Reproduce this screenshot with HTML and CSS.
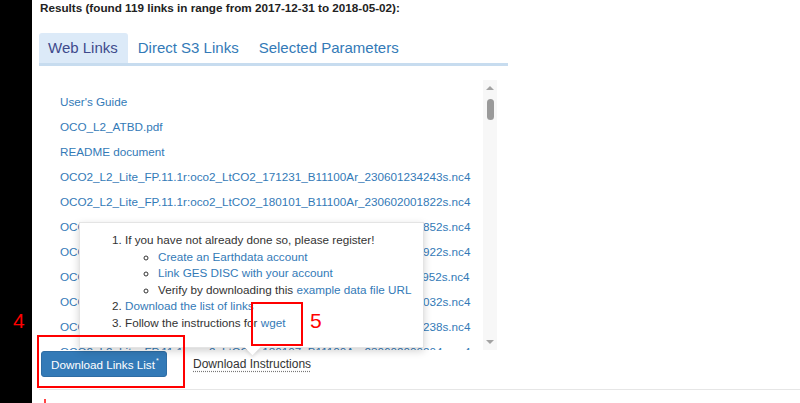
FILE: index.html
```html
<!DOCTYPE html>
<html>
<head>
<meta charset="utf-8">
<link rel="stylesheet" href="styles.css">
</head>
<body>
<div class="page">
  <div class="sidebar"></div>
  <div class="main">
    <div class="title">Results (found 119 links in range from 2017-12-31 to 2018-05-02):</div>
    <div class="tabs">
      <a class="tab active">Web Links</a>
      <a class="tab">Direct S3 Links</a>
      <a class="tab">Selected Parameters</a>
    </div>
    <div class="scrollbox">
      <ul class="links">
        <li><a>User's Guide</a></li>
        <li><a>OCO_L2_ATBD.pdf</a></li>
        <li><a>README document</a></li>
        <li><a>OCO2_L2_Lite_FP.11.1r:oco2_LtCO2_171231_B11100Ar_230601234243s.nc4</a></li>
        <li><a>OCO2_L2_Lite_FP.11.1r:oco2_LtCO2_180101_B11100Ar_230602001822s.nc4</a></li>
        <li><a>OCO2_L2_Lite_FP.11.1r:oco2_LtCO2_180102_B11100Ar_230602003852s.nc4</a></li>
        <li><a>OCO2_L2_Lite_FP.11.1r:oco2_LtCO2_180103_B11100Ar_230602005922s.nc4</a></li>
        <li><a>OCO2_L2_Lite_FP.11.1r:oco2_LtCO2_180104_B11100Ar_230602011952s.nc4</a></li>
        <li><a>OCO2_L2_Lite_FP.11.1r:oco2_LtCO2_180105_B11100Ar_230602014032s.nc4</a></li>
        <li><a>OCO2_L2_Lite_FP.11.1r:oco2_LtCO2_180106_B11100Ar_230602020238s.nc4</a></li>
        <li><a>OCO2_L2_Lite_FP.11.1r:oco2_LtCO2_180107_B11100Ar_230602000204s.nc4</a></li>
      </ul>
      <div class="scrollbar">
        <span class="arrow up"></span>
        <div class="track"><div class="thumb"></div></div>
        <span class="arrow down"></span>
      </div>
    </div>
    <div class="actions">
      <button class="btn">Download Links List<sup>*</sup></button>
      <a class="instr">Download Instructions</a>
    </div>
    <div class="footer-line"></div>

    <div class="popover">
      <ol class="steps">
        <li>If you have not already done so, please register!
          <ul class="sub">
            <li><a>Create an Earthdata account</a></li>
            <li><a>Link GES DISC with your account</a></li>
            <li>Verify by downloading this <a>example data file URL</a></li>
          </ul>
        </li>
        <li><a>Download the list of links</a></li>
        <li>Follow the instructions for <a>wget</a></li>
      </ol>
    </div>
  </div>
</div>
<div class="anno box4"></div>
<div class="anno num n4">4</div>
<div class="anno box5"></div>
<div class="anno num n5">5</div>
<div class="anno tick"></div>
</body>
</html>
```
FILE: styles.css
```css
html, body {
  margin: 0;
  padding: 0;
  background: #fff;
  font-family: "Liberation Sans", Arial, sans-serif;
  color: #333;
  overflow: hidden;
}
.page {
  display: flex;
  width: 800px;
  height: 403px;
}
.sidebar {
  width: 32px;
  background: #000;
  flex: none;
}
.main {
  position: relative;
  flex: 1;
  padding-left: 7px;
}
.title {
  font-size: 11.7px;
  font-weight: bold;
  line-height: 15px;
  color: #222;
  padding-left: 1px;
}
.tabs {
  display: flex;
  width: 469px;
  margin-top: 18px;
  border-bottom: 3px solid #c7dcef;
}
.tab {
  height: 30px;
  line-height: 30px;
  padding: 0 10px;
  font-size: 15px;
  color: #337ab7;
  border-radius: 3px 3px 0 0;
}
.tab.active {
  padding-left: 9px;
  background: #dceaf8;
  color: #3e4a8c;
}
.scrollbox {
  display: flex;
  width: 458px;
  height: 270px;
  margin-top: 14px;
}
.links {
  flex: 1;
  list-style: none;
  margin: 0;
  padding: 9px 0 0 21px;
  overflow: hidden;
}
.links li {
  height: 25px;
  line-height: 25px;
  font-size: 11.7px;
  white-space: nowrap;
}
.links a, .popover a {
  color: #337ab7;
}
.scrollbar {
  width: 14px;
  background: #f7f7f7;
  display: flex;
  flex-direction: column;
  align-items: center;
  padding: 6px 0 6px;
  box-sizing: border-box;
}
.arrow {
  width: 0;
  height: 0;
  border-left: 4px solid transparent;
  border-right: 4px solid transparent;
}
.arrow.up { border-bottom: 4px solid #a3a3a3; }
.arrow.down { border-top: 4px solid #a3a3a3; }
.track {
  flex: 1;
  padding-top: 9px;
}
.thumb {
  width: 7px;
  height: 21px;
  border-radius: 4px;
  background: #9a9a9a;
}
.actions {
  display: flex;
  align-items: center;
  gap: 26px;
  margin-top: 1px;
  padding-left: 2px;
}
.btn {
  width: 126px;
  height: 26px;
  padding: 0 0 0 9px;
  text-align: left;
  box-sizing: border-box;
  background: #337ab7;
  border: 1px solid #2e6da4;
  border-radius: 3px;
  color: #fff;
  font-family: "Liberation Sans", Arial, sans-serif;
  font-size: 11.7px;
}
.btn sup {
  font-size: 7px;
  vertical-align: 6px;
  margin-left: 1px;
}
.instr {
  font-size: 12px;
  color: #333;
  text-decoration: underline dotted #777;
  text-underline-offset: 3px;
}
.footer-line {
  margin-top: 12px;
  border-top: 1px solid #e6e6e6;
}
.popover {
  position: absolute;
  left: 47px;
  top: 222px;
  width: 345px;
  height: 126px;
  box-sizing: border-box;
  background: #fff;
  border: 1px solid #e4e4e4;
  box-shadow: 0 3px 8px rgba(0,0,0,0.18);
  padding-top: 9px;
}
.popover::after {
  content: "";
  position: absolute;
  left: 167px;
  bottom: -6px;
  width: 11px;
  height: 11px;
  background: #fff;
  transform: rotate(45deg);
  box-shadow: 2px 2px 3px rgba(0,0,0,0.08);
}
.steps {
  margin: 0;
  padding: 0 0 0 32px;
  list-style-position: inside;
  font-size: 11.7px;
  line-height: 16.6px;
}
.sub {
  list-style: circle outside;
  margin: 0;
  padding-left: 46px;
  font-size: 11.7px;
}
.anno {
  position: absolute;
}
.box4 {
  left: 37px;
  top: 335px;
  width: 144px;
  height: 49px;
  border: 2px solid #f00;
}
.box5 {
  left: 251px;
  top: 302px;
  width: 48px;
  height: 40px;
  border: 2px solid #f00;
}
.num {
  color: #f00;
  font-size: 21px;
  line-height: 21px;
}
.n4 { left: 13px; top: 310px; }
.n5 { left: 310px; top: 310px; }
.tick {
  left: 44px;
  top: 399px;
  width: 2px;
  height: 4px;
  background: #f44;
}
```
